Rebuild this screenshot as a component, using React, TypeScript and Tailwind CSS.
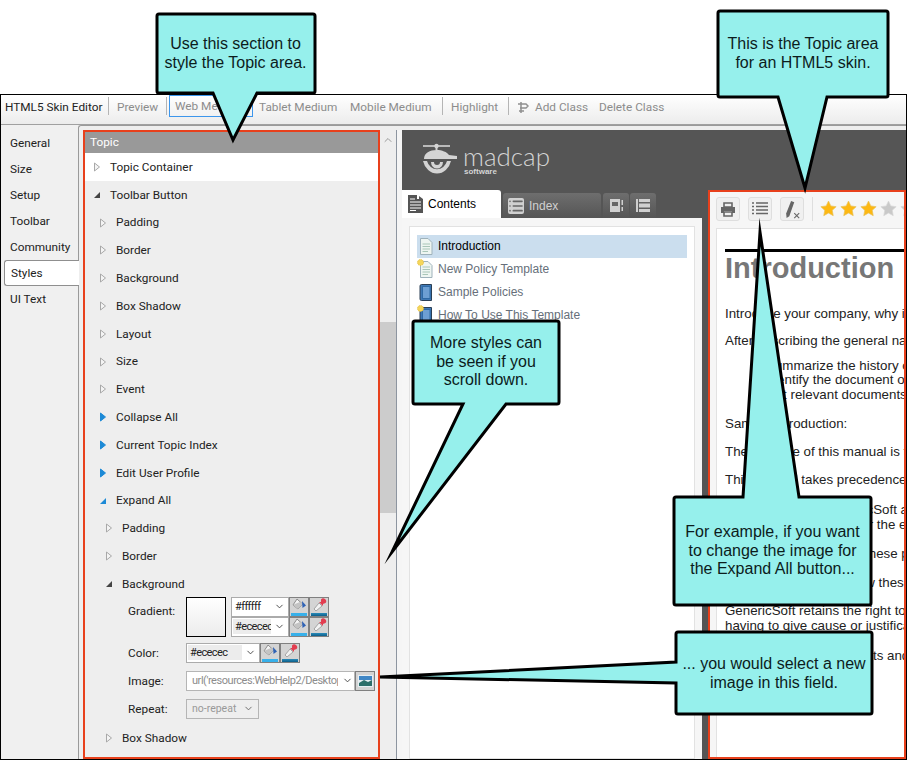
import { ChevronDown, ChevronUp, List } from 'lucide-react'

const tree = [
  { label: 'Toolbar Button', level: 0, state: 'open' },
  { label: 'Padding', level: 1, state: 'closed' },
  { label: 'Border', level: 1, state: 'closed' },
  { label: 'Background', level: 1, state: 'closed' },
  { label: 'Box Shadow', level: 1, state: 'closed' },
  { label: 'Layout', level: 1, state: 'closed' },
  { label: 'Size', level: 1, state: 'closed' },
  { label: 'Event', level: 1, state: 'closed' },
  { label: 'Collapse All', level: 1, state: 'blue' },
  { label: 'Current Topic Index', level: 1, state: 'blue' },
  { label: 'Edit User Profile', level: 1, state: 'blue' },
  { label: 'Expand All', level: 1, state: 'blueOpen' },
  { label: 'Padding', level: 2, state: 'closed' },
  { label: 'Border', level: 2, state: 'closed' },
  { label: 'Background', level: 2, state: 'open' },
]

const sideTabs = ['General', 'Size', 'Setup', 'Toolbar', 'Community', 'Styles', 'UI Text']

function Arrow({ state }: { state: string }) {
  if (state === 'closed') {
    return (
      <svg width="8" height="10" viewBox="0 0 8 10">
        <path d="M1.5 1 L6.5 5 L1.5 9 Z" fill="#f4f4f4" stroke="#a8a8a8" />
      </svg>
    )
  }
  if (state === 'blue') {
    return (
      <svg width="8" height="10" viewBox="0 0 8 10">
        <path d="M1.5 1 L6.5 5 L1.5 9 Z" fill="#1d8ad6" stroke="#1d8ad6" />
      </svg>
    )
  }
  const color = state === 'blueOpen' ? '#1d8ad6' : '#444444'
  return (
    <svg width="8" height="10" viewBox="0 0 8 10">
      <path d="M7 2 L7 8 L1 8 Z" fill={color} />
    </svg>
  )
}

function TreeRow({ label, level, state }: { label: string; level: number; state: string }) {
  const indent = level === 0 ? 'pl-[8px]' : level === 1 ? 'pl-[14px]' : 'pl-[20px]'
  return (
    <div className={`flex h-[27.8px] items-center ${indent}`}>
      <Arrow state={state} />
      <span className="ml-[9px] pt-[1px]">{label}</span>
    </div>
  )
}

function PaintButton() {
  return (
    <div className="flex h-5 w-5 shrink-0 flex-col items-center justify-between border-[1.5px] border-[#808080] bg-[#d4d4d4]">
      <svg width="15" height="13" viewBox="0 0 15 13">
        <path d="M5 1 L10.5 6 L6 11 L1 7 Z" fill="#f4f4f4" stroke="#8d8d8d" />
        <path d="M3 6 L8 4 L10.5 6 L6 11 L1 7 Z" fill="#c4c4c4" />
        <path d="M10 3 L14 7.5 L10.5 10 Z" fill="#2f62b5" />
      </svg>
      <div className="h-[3px] w-4 bg-[#37b0ea]" />
    </div>
  )
}

function PickButton() {
  return (
    <div className="flex h-5 w-5 shrink-0 flex-col items-center justify-between border-[1.5px] border-[#808080] bg-[#d4d4d4]">
      <svg width="15" height="13" viewBox="0 0 15 13">
        <path d="M7 5 L10 8 L4 13 L2 11 Z" fill="#f2f2f2" stroke="#a5a5a5" />
        <path d="M9 1.5 A2 2 0 0 1 13.5 5 L11 6 L11 8 L7 4 L9 4 Z" fill="#e23d50" />
      </svg>
      <div className="h-[3px] w-4 bg-gradient-to-b from-[#2a8cba] to-[#0d5f8a]" />
    </div>
  )
}

function ColorSelect({ value, highlight, width }: { value: string; highlight?: boolean; width: string }) {
  return (
    <div className={`flex h-[20px] shrink-0 items-center border-[1.5px] border-[#ababab] bg-white pl-[1px] ${width}`}>
      <span
        className={`flex h-[15px] flex-1 items-center overflow-hidden pl-[2px] text-[11px] tracking-[-0.6px] ${highlight ? 'bg-[#ececec]' : ''}`}
      >
        {value}
      </span>
      <ChevronDown className="mx-[3px] h-[11px] w-[11px] shrink-0 text-[#444]" />
    </div>
  )
}

function DocIcon({ star }: { star?: boolean }) {
  return (
    <svg width="14" height="17" viewBox="0 0 14 17" className="shrink-0 overflow-visible">
      <path d="M1.5 .5 H9 L13 4.5 V16.5 H1.5 Z" fill="#eef5f1" stroke="#9fb2bb" />
      <path d="M3.5 6 H11 M3.5 8.5 H11 M3.5 11 H11 M3.5 13.5 H9" stroke="#a9c6b8" />
      {star && <circle cx="1.5" cy="1.5" r="3" fill="#f4d65a" stroke="#e5b93a" strokeDasharray="1 1" />}
    </svg>
  )
}

function BookIcon({ star }: { star?: boolean }) {
  return (
    <svg width="14" height="17" viewBox="0 0 14 17" className="shrink-0 overflow-visible">
      <path d="M2.5 .5 H12.5 V16.5 H2.5 Q1 16.5 1 15 V2 Q1 .5 2.5 .5 Z" fill="#3f78b5" stroke="#2a3f55" />
      <rect x="3.5" y="2.5" width="7.5" height="12" fill="#6d9fd3" stroke="#2f6aa5" />
      {star && <circle cx="1.5" cy="1.5" r="3" fill="#f4d65a" stroke="#e5b93a" strokeDasharray="1 1" />}
    </svg>
  )
}

function Star({ on }: { on: boolean }) {
  return (
    <svg width="17" height="17" viewBox="0 0 24 24" className="shrink-0">
      <path
        d="M12 1.5 L15.3 8.4 L22.8 9.4 L17.3 14.6 L18.7 22.1 L12 18.4 L5.3 22.1 L6.7 14.6 L1.2 9.4 L8.7 8.4 Z"
        fill={on ? '#fdb813' : '#c9c9c9'}
        stroke={on ? '#e8c25a' : '#d8d8d8'}
      />
    </svg>
  )
}

function Logo() {
  return (
    <svg width="37" height="37" viewBox="0 0 37 37" className="shrink-0">
      <path d="M1 4 H28" stroke="#d4d4d4" strokeWidth="1.6" />
      <circle cx="14.5" cy="4" r="2.2" fill="#d4d4d4" />
      <path d="M14.5 4 V8" stroke="#d4d4d4" strokeWidth="2" />
      <path d="M2 17 C2 11 8 8 14.5 8 C20 8 25 10 27 13 L35 14 V17 Z" fill="#d4d4d4" />
      <path d="M1 19 A14.5 17 0 0 0 29 19 H25 A10.5 12 0 0 1 5 19 Z" fill="#d4d4d4" />
      <path d="M9 20 A5.5 6 0 0 0 21 20 H18 A3 3 0 0 1 12 20 Z" fill="#d4d4d4" />
    </svg>
  )
}

const bubbles = [
  'M159 14 H313 Q315 14 315 16 V91 Q315 93 313 93 H257 L233 140 L213 93 H159 Q157 93 157 91 V16 Q157 14 159 14 Z',
  'M720 11 H886 Q888 11 888 13 V95 Q888 97 886 97 H827 L805 188 L778 97 H720 Q718 97 718 95 V13 Q718 11 720 11 Z',
  'M415 321 H557 Q559 321 559 323 V402 Q559 404 557 404 H506 L392 552 L463 404 H415 Q413 404 413 402 V323 Q413 321 415 321 Z',
  'M676 497 H743 L760 232 L799 497 H869 Q871 497 871 499 V603 Q871 605 869 605 H676 Q674 605 674 603 V499 Q674 497 676 497 Z',
  'M678 632 H870 Q872 632 872 634 V712 Q872 714 870 714 H678 Q676 714 676 712 V683 L380 677 L676 662 V634 Q676 632 678 632 Z',
]

export default function App() {
  return (
    <div className="relative h-[760px] w-[907px] overflow-hidden bg-white pt-[94px] font-['Roboto',sans-serif] text-[11.8px] text-[#222]">
      <div className="flex h-[666px] w-[907px] flex-col border border-black bg-[#f0f0f0]">
        {/* Top toolbar */}
        <div className="flex h-[30px] shrink-0 items-start border-b border-[#a0a0a0] bg-gradient-to-b from-white to-[#ececec] text-[#8c8c8c]">
          <div className="flex h-[22px] items-center whitespace-nowrap">
            <span className="ml-[4px] mt-[3px] w-[103px] text-[#222]">HTML5 Skin Editor</span>
            <div className="h-[18px] w-px bg-[#b5b5b5]" />
            <span className="ml-[8px] mt-[3px] w-[49px]">Preview</span>
            <div className="h-[18px] w-px bg-[#b5b5b5]" />
            <div className="ml-[2px] flex h-[22px] w-[84px] items-center border border-[#3c96ec] pl-[5px] pt-[2px]">Web Medium</div>
            <span className="ml-[6px] mt-[3px] w-[91px]">Tablet Medium</span>
            <span className="mt-[3px] w-[92px]">Mobile Medium</span>
            <div className="h-[18px] w-px bg-[#b5b5b5]" />
            <span className="ml-[8px] mt-[3px] w-[57px]">Highlight</span>
            <div className="h-[18px] w-px bg-[#b5b5b5]" />
            <svg width="12" height="13" viewBox="0 0 12 13" className="ml-[8px] mt-[2px]">
              <path d="M1 3 H9 L11 5 L9 7 H3 M4 1 V12 M2 10 H7" fill="none" stroke="#8f8f8f" strokeWidth="1.5" />
            </svg>
            <span className="ml-[6px] mt-[3px] w-[64px]">Add Class</span>
            <span className="mt-[3px]">Delete Class</span>
          </div>
        </div>

        <div className="flex min-h-0 flex-1">
          {/* Side tabs */}
          <div className="flex w-[77px] shrink-0 flex-col pl-[3px] pt-[5px]">
            {sideTabs.map((tab) =>
              tab === 'Styles' ? (
                <div
                  key={tab}
                  className="relative z-10 -mr-px flex h-[26px] items-center rounded-l-[3px] border border-r-0 border-[#8f8f8f] bg-white pl-[6px] pt-[2px]"
                >
                  {tab}
                </div>
              ) : (
                <div key={tab} className="flex h-[26px] items-center pl-[6px] pt-[2px]">
                  {tab}
                </div>
              ),
            )}
          </div>

          {/* Editor panel */}
          <div className="flex min-w-0 flex-1 rounded-tl-[3px] border-l border-t border-[#9a9a9a] bg-[#eeeeee] pl-[4px] pt-[4px]">
            {/* Topic tree */}
            <div className="h-[629px] w-[297px] shrink-0 overflow-hidden border-[2.5px] border-[#e8401c]">
              <div className="flex h-[21px] items-center bg-[#999999] pl-[5px] text-white">Topic</div>
              <div className="flex h-[28px] items-center bg-white pl-[8px]">
                <Arrow state="closed" />
                <span className="ml-[9px] pt-[1px]">Topic Container</span>
              </div>
              {tree.map((row, i) => (
                <TreeRow key={i} label={row.label} level={row.level} state={row.state} />
              ))}

              {/* Background fields */}
              <div className="-mt-[1px] ml-[43px] text-[#222]">
                <div className="flex items-start">
                  <span className="mt-[6px] w-[58px]">Gradient:</span>
                  <div className="h-[40px] w-[40px] border border-black bg-gradient-to-b from-white to-[#ececec]" />
                  <div className="ml-[5px] flex">
                    <div className="flex flex-col">
                      <ColorSelect value="#ffffff" width="w-[58px]" />
                      <ColorSelect value="#ececec" highlight width="w-[58px]" />
                    </div>
                    <div className="flex flex-col">
                      <div className="flex">
                        <PaintButton />
                        <PickButton />
                      </div>
                      <div className="flex">
                        <PaintButton />
                        <PickButton />
                      </div>
                    </div>
                  </div>
                </div>
                <div className="mt-[6px] flex items-center">
                  <span className="mt-[2px] w-[58px]">Color:</span>
                  <ColorSelect value="#ececec" highlight width="w-[74px]" />
                  <PaintButton />
                  <PickButton />
                </div>
                <div className="mt-[8px] flex items-center">
                  <span className="mt-[2px] w-[58px]">Image:</span>
                  <div className="flex h-[20px] w-[169px] items-center border border-[#b5b5b5] bg-white pl-[5px] text-[11px] tracking-[-0.45px] text-[#8c8c8c]">
                    <span className="w-[146px] overflow-hidden whitespace-nowrap">url('resources:WebHelp2/Desktop</span>
                    <ChevronDown className="ml-[4px] h-[11px] w-[11px] text-[#444]" />
                  </div>
                  <div className="flex h-5 w-5 items-center justify-center border-[1.5px] border-[#808080] bg-[#d4d4d4]">
                    <svg width="15" height="12" viewBox="0 0 15 12">
                      <rect width="15" height="12" fill="#e6eef3" />
                      <rect x="1" y="1" width="13" height="4" fill="#3f86c5" />
                      <path d="M1 8 L6 5 L10 7 L14 5 V11 H1 Z" fill="#2c6f6a" />
                    </svg>
                  </div>
                </div>
                <div className="mt-[8px] flex items-center">
                  <span className="mt-[2px] w-[58px]">Repeat:</span>
                  <div className="flex h-[20px] w-[73px] items-center justify-between border-[1.5px] border-[#b5b5b5] bg-[#eeeeee] pl-[5px] pr-[4px] text-[10.5px] text-[#999]">
                    no-repeat
                    <ChevronDown className="h-[11px] w-[11px] text-[#666]" />
                  </div>
                </div>
              </div>
              <div className="mt-[9px] flex h-[20px] items-center pl-[20px]">
                <Arrow state="closed" />
                <span className="ml-[9px] pt-[1px]">Box Shadow</span>
              </div>
            </div>

            {/* Scrollbar */}
            <div className="flex w-[17px] shrink-0 flex-col items-center border-r border-[#8d95a0] pt-[4px]">
              <ChevronUp className="h-3 w-3 text-[#9a9a9a]" />
              <div className="mt-[176px] h-[191px] w-full bg-[#cccccc]" />
            </div>
            <div className="w-[5px] shrink-0 bg-[#f5f5f5]" />

            {/* Skin preview */}
            <div className="flex h-[629px] w-[504px] shrink-0 flex-col bg-[#555555] font-['Liberation_Sans',Arial,sans-serif]">
              <div className="flex h-[60px] shrink-0 items-start pl-[20px] pt-[12px] text-[#d4d4d4]">
                <Logo />
                <div className="ml-[4px] mt-[2px] flex flex-col">
                  <span className="font-['Lato',sans-serif] text-[26px] font-light leading-[24px]">madcap</span>
                  <span className="ml-[1px] text-[8px] font-bold leading-[7px]">software</span>
                </div>
              </div>
              <div className="flex min-h-0 flex-1">
                {/* Contents pane */}
                <div className="flex w-[300px] shrink-0 flex-col">
                  <div className="flex h-[28px] shrink-0 items-end gap-[1px] text-[12px]">
                    <div className="flex h-[28px] w-[99px] items-center rounded-tr-[3px] bg-white pl-[6px] text-black">
                      <svg width="15" height="18" viewBox="0 0 15 18">
                        <path d="M0 0 H9 V4 H11 V1 L15 4 V18 H0 Z" fill="#555" />
                        <path d="M2 4 H7 M2 7 H13 M2 10 H13 M2 13 H13 M2 15.5 H8" stroke="#fff" />
                      </svg>
                      <span className="ml-[5px]">Contents</span>
                    </div>
                    <div className="ml-[1px] flex h-[25px] w-[98px] items-center rounded-t-[3px] bg-gradient-to-b from-[#6e6e6e] to-[#555] pl-[5px] text-[#d0d0d0]">
                      <List className="h-4 w-4 shrink-0 rounded-[2px] bg-[#d0d0d0] text-[#666]" strokeWidth={2.5} />
                      <span className="ml-[5px]">Index</span>
                    </div>
                    <div className="ml-[1px] flex h-[25px] w-[26px] items-center justify-center rounded-t-[3px] bg-gradient-to-b from-[#6e6e6e] to-[#555]">
                      <svg width="15" height="15" viewBox="0 0 15 15">
                        <path d="M1 1 H11 V14 H1 Z M12.5 2 H14 V7 H12.5 Z M12.5 9 H14 V13 H12.5 Z" fill="#d0d0d0" />
                        <rect x="3" y="4" width="6" height="4" fill="#666" />
                      </svg>
                    </div>
                    <div className="flex h-[25px] w-[26px] items-center justify-center rounded-t-[3px] bg-gradient-to-b from-[#6e6e6e] to-[#555]">
                      <svg width="16" height="15" viewBox="0 0 16 15">
                        <path d="M1 1 H3 V14 H1 Z M4 1 H15 V4 H4 Z M4 5.5 H15 V9.5 H4 Z M4 11 H15 V14 H4 Z" fill="#d0d0d0" />
                      </svg>
                    </div>
                  </div>
                  <div className="min-h-0 flex-1 bg-[#f6f6f6] px-[7px] pt-[8px]">
                    <div className="h-full border border-[#e2e2e2] bg-white px-[7px] pt-[8px] text-[12px] text-[#666f7a]">
                      <div className="flex h-[23px] items-center bg-[#cbdeee] pb-[1px] pl-[2px] text-black">
                        <DocIcon />
                        <span className="ml-[5px]">Introduction</span>
                      </div>
                      <div className="flex h-[23px] items-center pb-[1px] pl-[2px]">
                        <DocIcon star />
                        <span className="ml-[5px]">New Policy Template</span>
                      </div>
                      <div className="flex h-[23px] items-center pb-[1px] pl-[2px]">
                        <BookIcon />
                        <span className="ml-[5px]">Sample Policies</span>
                      </div>
                      <div className="flex h-[23px] items-center pb-[1px] pl-[2px]">
                        <BookIcon star />
                        <span className="ml-[5px]">How To Use This Template</span>
                      </div>
                    </div>
                  </div>
                </div>

                <div className="w-[6px] shrink-0" />

                {/* Topic pane */}
                <div className="flex min-w-0 flex-1 flex-col overflow-hidden border-[2px] border-[#e8401c] bg-[#f6f6f6]">
                  <div className="flex h-[36px] shrink-0 items-start pl-[6px] pt-[5px] text-[#666]">
                    <div className="flex h-[24px] w-[24px] shrink-0 items-center justify-center rounded-[3px] border border-[#dedede] bg-[#f0f0f0]">
                      <svg width="16" height="15" viewBox="0 0 16 15">
                        <path d="M4 1 H12 V5 H4 Z M4 10 H12 V14 H4 Z" fill="none" stroke="#666" strokeWidth="1.6" />
                        <path d="M1 5 H15 V11 H12 V9 H4 V11 H1 Z" fill="#666" />
                      </svg>
                    </div>
                    <div className="ml-[8px] flex h-[24px] w-[24px] shrink-0 items-center justify-center rounded-[3px] border border-[#dedede] bg-[#f0f0f0]">
                      <svg width="16" height="14" viewBox="0 0 16 14">
                        <path d="M0 1 H2 M4 1 H16 M0 4.5 H2 M4 4.5 H16 M0 8 H2 M4 8 H16 M0 11.5 H2 M4 11.5 H16" stroke="#666" strokeWidth="1.4" />
                      </svg>
                    </div>
                    <div className="ml-[8px] flex h-[24px] w-[24px] shrink-0 items-center justify-center rounded-[3px] border border-[#dedede] bg-[#f0f0f0]">
                      <svg width="18" height="19" viewBox="0 0 20 21">
                        <path d="M9 1 L12.5 2.5 L7 18 L4 20 L3.5 15 Z" fill="#666" />
                        <path d="M12.5 14.5 L18 20 M18 14.5 L12.5 20" stroke="#666" strokeWidth="1.2" />
                      </svg>
                    </div>
                    <div className="ml-[8px] h-[24px] w-px shrink-0 bg-[#dedede]" />
                    <div className="ml-[7px] mt-[3px] flex shrink-0 gap-[3px]">
                      <Star on />
                      <Star on />
                      <Star on />
                      <Star on={false} />
                      <Star on={false} />
                    </div>
                  </div>
                  <div className="ml-[6px] min-h-0 flex-1 whitespace-nowrap border-l border-t border-[#e2e2e2] bg-white pl-[8px] pt-[20px] text-[13.33px] leading-[14.5px] text-[#222]">
                    <div className="h-[3px] bg-black" />
                    <h1 className="mt-[1px] text-[29px] font-bold leading-[30px] text-[#777777]">Introduction</h1>
                    <p className="mt-[24px]">Introduce your company, why it</p>
                    <p className="mt-[12.5px]">After describing the general nature</p>
                    <div className="ml-[41px] mt-[10px]">
                      <p>Summarize the history of</p>
                      <p>Identify the document of</p>
                      <p>List relevant documents</p>
                    </div>
                    <p className="mt-[15px]">Sample Introduction:</p>
                    <p className="mt-[13.5px]">The purpose of this manual is to</p>
                    <p className="mt-[13.5px]">This manual takes precedence over</p>
                    <p className="mt-[15.5px]">All employees of GenericSoft and</p>
                    <p>who were responsible for the entire</p>
                    <p className="mt-[14.5px]">Everybody should read these policies</p>
                    <p className="mt-[14.5px]">We want all staff to follow these</p>
                    <p className="mt-[14px]">GenericSoft retains the right to change</p>
                    <p>having to give cause or justification</p>
                    <p className="mt-[15.5px]">Staff will hold their benefits and</p>
                  </div>
                </div>
              </div>
            </div>
          </div>
        </div>
      </div>

      {/* Callouts */}
      <svg className="absolute left-0 top-0" width="907" height="760" viewBox="0 0 907 760" aria-hidden="true">
        {bubbles.map((d, i) => (
          <path key={i} d={d} fill="#96f0ec" stroke="#000" strokeWidth="3" strokeMiterlimit="20" />
        ))}
      </svg>
      <div className="font-['Liberation_Sans',Arial,sans-serif] text-[16px] leading-[18.5px] text-[#0c1c1c]">
        <div className="absolute left-[157px] top-[35px] w-[157px] text-center">Use this section to<br />style the Topic area.</div>
        <div className="absolute left-[718px] top-[35px] w-[170px] text-center">This is the Topic area<br />for an HTML5 skin.</div>
        <div className="absolute left-[413px] top-[334px] w-[146px] text-center">More styles can<br />be seen if you<br />scroll down.</div>
        <div className="absolute left-[674px] top-[523px] w-[197px] text-center">For example, if you want<br />to change the image for<br />the Expand All button...</div>
        <div className="absolute left-[676px] top-[655px] w-[196px] text-center">... you would select a new<br />image in this field.</div>
      </div>
    </div>
  )
}
